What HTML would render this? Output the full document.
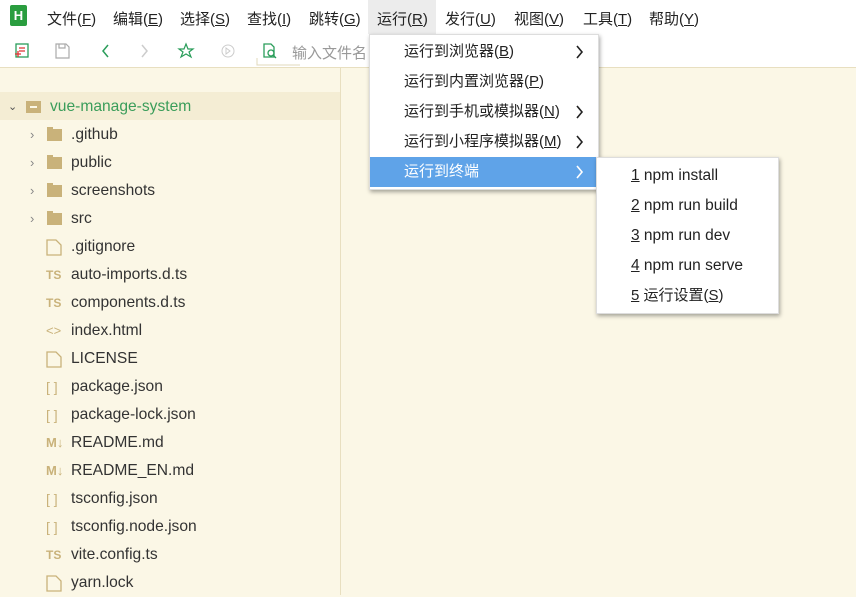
<!DOCTYPE html>
<html><head><meta charset="utf-8"><style>
*{margin:0;padding:0;box-sizing:border-box}
body{width:856px;height:595px;overflow:hidden;background:#fbf7e6;font-family:"Liberation Sans","Noto Sans CJK SC",sans-serif;font-size:15px;color:#333;position:relative}
.abs{position:absolute}
#menubar{left:0;top:0;width:856px;height:34px;background:#fff}
#menubar span{position:absolute;top:8px;font-size:15px;color:#222}
#toolbar{left:0;top:34px;width:856px;height:34px;background:#fff;border-bottom:1px solid #e8dfc0}
.row{position:absolute;left:0;width:340px;height:28px;line-height:28px}
.row .t{position:absolute;left:71px;color:#333;font-size:15.6px}
.row .i{position:absolute;left:46px;color:#c9b27a;font-size:12px}
.menu{background:#fff;box-shadow:1px 2px 4px rgba(0,0,0,.35);border:1px solid #ddd}
.mi{position:absolute;height:30px;line-height:30px;font-size:15px;color:#222}
u{text-decoration:underline}
</style></head><body>
<div id="menubar" class="abs">
 <div class="abs" style="left:10px;top:5px;width:17px;height:21px;background:#2a9d3f;border-radius:2px;color:#fff;font-size:13px;font-weight:bold;text-align:center;line-height:21px">H</div>
 <div class="abs" style="left:368px;top:0;width:68px;height:34px;background:#ececec"></div>
 <span style="left:47px">文件(<u>F</u>)</span>
 <span style="left:113px">编辑(<u>E</u>)</span>
 <span style="left:180px">选择(<u>S</u>)</span>
 <span style="left:247px">查找(<u>I</u>)</span>
 <span style="left:309px">跳转(<u>G</u>)</span>
 <span style="left:377px">运行(<u>R</u>)</span>
 <span style="left:445px">发行(<u>U</u>)</span>
 <span style="left:514px">视图(<u>V</u>)</span>
 <span style="left:583px">工具(<u>T</u>)</span>
 <span style="left:649px">帮助(<u>Y</u>)</span>
</div>
<div id="toolbar" class="abs">
 <svg class="abs" style="left:0;top:0" width="300" height="34">
  <rect x="16" y="10" width="12" height="13" fill="none" stroke="#2a9d5a" stroke-width="1.3"/><path d="M19 14h6M19 17h6M15 20h6M18 17v6" stroke="#d33" stroke-width="1.3"/>
  <path d="M56 10h10l3 3v11h-13z M59 10v4h6v-4" fill="none" stroke="#aaa" stroke-width="1.2"/>
  <path d="M108 11l-5 6 5 6" fill="none" stroke="#2a9d5a" stroke-width="1.5"/>
  <path d="M142 11l5 6-5 6" fill="none" stroke="#ccc" stroke-width="1.5"/>
  <path d="M186 10l2 5h5l-4 3 2 5-5-3-5 3 2-5-4-3h5z" fill="none" stroke="#2a9d5a" stroke-width="1.2"/>
  <circle cx="228" cy="17" r="6" fill="none" stroke="#ccc"/><path d="M226 14v6l4-3z" fill="none" stroke="#ccc"/>
  <path d="M264 10h7l3 3v10h-10z" fill="none" stroke="#2a9d5a" stroke-width="1.3"/><circle cx="271" cy="19" r="3" fill="none" stroke="#2a9d5a" stroke-width="1.3"/><path d="M273 21l3 3" stroke="#2a9d5a" stroke-width="1.3"/>
  <path d="M257 24v7h60" fill="none" stroke="#e0d8bb"/>
 </svg>
 <span class="abs" style="left:292px;top:8px;color:#999;font-size:15px">输入文件名</span>
</div>
<div class="abs" style="left:340px;top:68px;width:1px;height:527px;background:#e8dfc0"></div>
<div class="abs" style="left:0;top:92px;width:340px;height:28px;background:#f4edd4"></div>
<div class="row" style="top:93px"><span class="abs" style="left:8px;color:#555;font-size:11px">⌄</span>
 <div class="abs" style="left:26px;top:8px;width:15px;height:12px;background:#c9b27a"></div><div class="abs" style="left:30px;top:13px;width:7px;height:1.5px;background:#fbf7e6"></div>
 <span class="t" style="left:50px;color:#3a9d5a">vue-manage-system</span></div>
<div id="tree"></div>
<script>
const rows=[["f",".github"],["f","public"],["f","screenshots"],["f","src"],["d",".gitignore"],["ts","auto-imports.d.ts"],["ts","components.d.ts"],["h","index.html"],["d","LICENSE"],["j","package.json"],["j","package-lock.json"],["m","README.md"],["m","README_EN.md"],["j","tsconfig.json"],["j","tsconfig.node.json"],["ts","vite.config.ts"],["d","yarn.lock"]];
let h="";rows.forEach((r,i)=>{const y=121+i*28;let ic="";
if(r[0]=="f")ic='<span class="abs" style="left:30px;color:#888;font-size:13px">›</span><div class="abs" style="left:47px;top:8px;width:15px;height:12px;background:#c9b27a"></div><div class="abs" style="left:47px;top:6px;width:6px;height:3px;background:#c9b27a"></div>';
else if(r[0]=="d")ic='<svg class="abs" style="left:46px;top:6px" width="16" height="17"><path d="M1 1h9l5 5v10H1z" fill="none" stroke="#c9b27a" stroke-width="1.3"/></svg>';
else if(r[0]=="ts")ic='<span class="i" style="font-weight:bold">TS</span>';
else if(r[0]=="h")ic='<span class="i" style="font-size:13px">&lt;&gt;</span>';
else if(r[0]=="j")ic='<span class="i" style="font-size:14px">[ ]</span>';
else ic='<span class="i" style="font-weight:bold;font-size:13px">M↓</span>';
h+=`<div class="row" style="top:${y}px">${ic}<span class="t">${r[1]}</span></div>`;});
document.getElementById("tree").innerHTML=h;
</script>
<div class="abs menu" style="left:369px;top:34px;width:230px;height:156px">
 <div class="abs" style="left:0;top:122px;width:226px;height:30px;background:#5fa3e8"></div>
 <div class="mi" style="left:34px;top:2px">运行到浏览器(<u>B</u>)</div>
 <div class="mi" style="left:34px;top:32px">运行到内置浏览器(<u>P</u>)</div>
 <div class="mi" style="left:34px;top:62px">运行到手机或模拟器(<u>N</u>)</div>
 <div class="mi" style="left:34px;top:92px">运行到小程序模拟器(<u>M</u>)</div>
 <div class="mi" style="left:34px;top:122px;color:#fff">运行到终端</div>
 <svg class="abs" style="left:204px;top:8px" width="12" height="140"><g fill="none" stroke="#222" stroke-width="1.6"><path d="M3 3l5 6-5 6"/><path d="M3 63l5 6-5 6"/><path d="M3 93l5 6-5 6"/><path d="M3 123l5 6-5 6" stroke="#fff"/></g></svg>
</div>
<div class="abs menu" style="left:596px;top:157px;width:183px;height:157px">
 <div class="mi" style="left:34px;top:3px;font-size:15.5px"><u>1</u> npm install</div>
 <div class="mi" style="left:34px;top:33px;font-size:15.5px"><u>2</u> npm run build</div>
 <div class="mi" style="left:34px;top:63px;font-size:15.5px"><u>3</u> npm run dev</div>
 <div class="mi" style="left:34px;top:93px;font-size:15.5px"><u>4</u> npm run serve</div>
 <div class="mi" style="left:34px;top:123px"><u>5</u> 运行设置(<u>S</u>)</div>
</div>
</body></html>
